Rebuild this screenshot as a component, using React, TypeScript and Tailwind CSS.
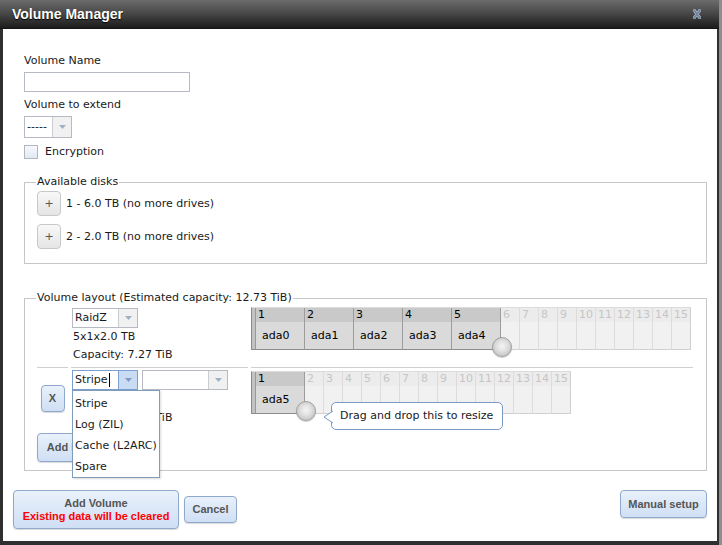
import React from 'react';

const sans = "font-['DejaVu_Sans',sans-serif]";
const btnFont = "font-['Liberation_Sans',Arial,sans-serif] font-bold";

interface SelectProps {
    value?: string;
    width: string;
    height?: string;
    focused?: boolean;
}

const Select = ({ value, width, height = 'h-[20px]', focused }: SelectProps) => (
    <div className={`flex ${width} ${height} border bg-white ${focused ? 'border-[#7a9fd0]' : 'border-[#b6bac4]'}`}>
        <div className="flex-1 flex items-center pl-[2px] overflow-hidden whitespace-nowrap">
            {value}
            {focused && <span className="ml-[1px] w-px h-[14px] bg-black" />}
        </div>
        <div className={`w-[19px] flex items-center justify-center border-l ${focused ? 'bg-[#cadcf3] border-[#7a9fd0]' : 'bg-[#f1f1f1] border-[#c9ccd3]'}`}>
            <svg width="7" height="4" viewBox="0 0 7 4">
                <path d="M0 0h7L3.5 4z" fill={focused ? '#7f9bc6' : '#9fb0c8'} />
            </svg>
        </div>
    </div>
);

const BlueButton = ({ children, className = '' }: { children: React.ReactNode; className?: string }) => (
    <div className={`${btnFont} text-[11px] leading-[13px] text-[#555] rounded-[4px] border border-[#8ea9cc] bg-gradient-to-b from-[#e9f1fb] to-[#cfdff4] shadow-[0_1px_1px_rgba(0,0,0,0.15)] flex flex-col items-center justify-center ${className}`}>
        {children}
    </div>
);

const DiskGrid = ({ disks, total, children }: { disks: string[]; total: number; children?: React.ReactNode }) => (
    <div className="relative flex w-fit border-l border-[#8c8c8c] border-t border-t-[#dcdcdc]">
        <div className="w-[4px] bg-[#c2c2c2] border-r border-[#9a9a9a] border-b border-b-[#8c8c8c]" />
        {Array.from({ length: total }).map((_, i) => {
            const used = i < disks.length;
            const last = i === total - 1;
            return (
                <div
                    key={i}
                    className={`flex flex-col border-b ${used ? 'w-[49px] border-r border-[#9c9c9c] border-b-[#8c8c8c]' : `w-[19px] border-r ${last ? 'border-[#d0d0d0]' : 'border-[#dcdcdc]'} border-b-[#d0d0d0]`}`}
                >
                    <div className={`h-[14px] pl-[2px] leading-[14px] ${used ? 'bg-[#c9c9c9] text-black' : 'bg-[#ececec] text-[#c6c6c6]'}`}>{i + 1}</div>
                    <div className={`h-[27px] pl-[6px] leading-[27px] ${used ? 'bg-[#dadada] text-black' : 'bg-[#f1f1f1]'}`}>{disks[i]}</div>
                </div>
            );
        })}
        <div
            className="absolute w-[20px] h-[20px] rounded-full border border-[#a0a0a0] bg-[radial-gradient(circle_at_50%_45%,#f4f4f4,#e0e0e0_40%,#b4b4b4)] shadow-[0_1px_1px_rgba(0,0,0,0.2)]"
            style={{ left: 5 + disks.length * 49 - 10, top: 29 }}
        />
        {children}
    </div>
);

const App = () => {
    return (
        <div className="w-[722px] h-[545px] bg-[#8d8d8d] flex overflow-hidden">
            <div className="w-[719px] h-[545px] bg-[#2f2f2f] flex flex-col">
                {/* title bar */}
                <div className="h-[29px] flex items-center justify-between pl-[12px] pr-[18px] bg-gradient-to-b from-[#6c6c6c] via-[#464646] to-[#1c1c1c] border-b border-[#151515]">
                    <span className={`${btnFont} text-[14px] text-white [text-shadow:0_1px_1px_#000]`}>Volume Manager</span>
                    <svg width="8" height="10" viewBox="0 0 8 10">
                        <path d="M1 1l6 8M7 1L1 9" stroke="#aab6c6" strokeWidth="3" strokeLinecap="square" />
                        <path d="M1 1l6 8M7 1L1 9" stroke="#6f819b" strokeWidth="1.6" strokeLinecap="square" />
                    </svg>
                </div>

                {/* body */}
                <div className={`relative bg-white ml-[3px] mr-[2px] h-[512px] pt-[25px] ${sans} text-[11px] leading-[14px] text-[#1a1a1a]`}>
                    <div className="pl-[21px] pr-[10px]">
                        <div>Volume Name</div>
                        <div className="mt-[4px] w-[166px] h-[20px] border border-[#b6bac4]" />
                        <div className="mt-[6px]">Volume to extend</div>
                        <div className="mt-[4px]">
                            <Select value="-----" width="w-[48px]" height="h-[22px]" />
                        </div>
                        <div className="mt-[7px] flex items-center gap-[7px]">
                            <div className="w-[14px] h-[14px] border border-[#b0b6c2] bg-gradient-to-b from-[#f6f8fc] to-[#e2e9f3]" />
                            <span>Encryption</span>
                        </div>

                        <fieldset className="mt-[16px] border border-[#c6c6c6] pl-[12px] pr-[12px] pb-[14px]">
                            <legend className="-ml-[1px] px-[1px]">Available disks</legend>
                            {['1 - 6.0 TB (no more drives)', '2 - 2.0 TB (no more drives)'].map((d, i) => (
                                <div key={d} className={`flex items-center gap-[5px] ${i === 0 ? 'mt-[2px]' : 'mt-[8px]'}`}>
                                    <div className="w-[24px] h-[25px] rounded-[4px] border border-[#c8c8c8] bg-gradient-to-b from-[#f8f8f8] to-[#e5e5e5] flex items-center justify-center text-[#555]">+</div>
                                    <span>{d}</span>
                                </div>
                            ))}
                        </fieldset>

                        <fieldset className="mt-[27px] border border-[#c6c6c6] pl-[12px] pr-[12px] pb-[8px]">
                            <legend className="-ml-[1px] px-[1px]">Volume layout (Estimated capacity: 12.73 TiB)</legend>
                            <div className="grid grid-cols-[31px_177px_442px] gap-x-[3px]">
                                {/* row 1 */}
                                <div className="border-b border-[#cfcfcf]" />
                                <div className="pt-[3px] pb-[3px] border-b border-[#cfcfcf]">
                                    <div className="ml-[1px]">
                                        <Select value="RaidZ" width="w-[66px]" />
                                    </div>
                                    <div className="pl-[2px] leading-[18px]">5x1x2.0 TB</div>
                                    <div className="pl-[2px] leading-[18px]">Capacity: 7.27 TiB</div>
                                </div>
                                <div className="pt-[2px] border-b border-[#cfcfcf]">
                                    <DiskGrid disks={['ada0', 'ada1', 'ada2', 'ada3', 'ada4']} total={15} />
                                </div>

                                {/* row 2 */}
                                <div className="pt-[2px] flex items-center justify-center">
                                    <BlueButton className="w-[24px] h-[27px]">X</BlueButton>
                                </div>
                                <div className="pt-[2px]">
                                    <div className="flex gap-[4px] ml-[1px]">
                                        <div className="relative">
                                            <Select value="Stripe" width="w-[66px]" focused />
                                            <div className="absolute left-0 top-[20px] w-[88px] pt-[2px] border border-[#7f9db9] bg-white shadow-[1px_1px_2px_rgba(0,0,0,0.15)] z-20">
                                                {['Stripe', 'Log (ZIL)', 'Cache (L2ARC)', 'Spare'].map(o => (
                                                    <div key={o} className="h-[21px] leading-[21px] pl-[2px]">{o}</div>
                                                ))}
                                            </div>
                                        </div>
                                        <Select width="w-[86px]" />
                                    </div>
                                    <div className="pl-[2px] leading-[18px] mt-[1px]">1x1x2.0 TB</div>
                                    <div className="pl-[2px] leading-[18px]">Capacity: 1.82 TiB</div>
                                </div>
                                <div className="pt-[3px]">
                                    <DiskGrid disks={['ada5']} total={15}>
                                        <div className="absolute left-[79px] top-[30px] w-[172px] h-[28px] rounded-[5px] border border-[#7b9ac2] bg-white flex items-center pl-[8px] whitespace-nowrap z-10">
                                            Drag and drop this to resize
                                            <svg className="absolute left-[-9px] top-[7px]" width="10" height="14" viewBox="0 0 10 14">
                                                <path d="M10 1L1 7l9 6" fill="white" stroke="#7b9ac2" strokeWidth="1" />
                                            </svg>
                                        </div>
                                    </DiskGrid>
                                </div>
                            </div>
                            <BlueButton className="mt-[6px] w-[110px] h-[29px] whitespace-nowrap">Add Extra Device</BlueButton>
                        </fieldset>
                    </div>

                    {/* footer buttons */}
                    <div className="mt-[19px] pl-[10px] pr-[10px] flex items-start">
                        <BlueButton className="w-[166px] h-[39px]">
                            <span>Add Volume</span>
                            <span className="text-[#ff0000]">Existing data will be cleared</span>
                        </BlueButton>
                        <BlueButton className="ml-[5px] mt-[6px] w-[53px] h-[27px]">Cancel</BlueButton>
                        <BlueButton className="ml-auto w-[87px] h-[28px]">Manual setup</BlueButton>
                    </div>
                </div>
            </div>
        </div>
    );
};

export default App;
